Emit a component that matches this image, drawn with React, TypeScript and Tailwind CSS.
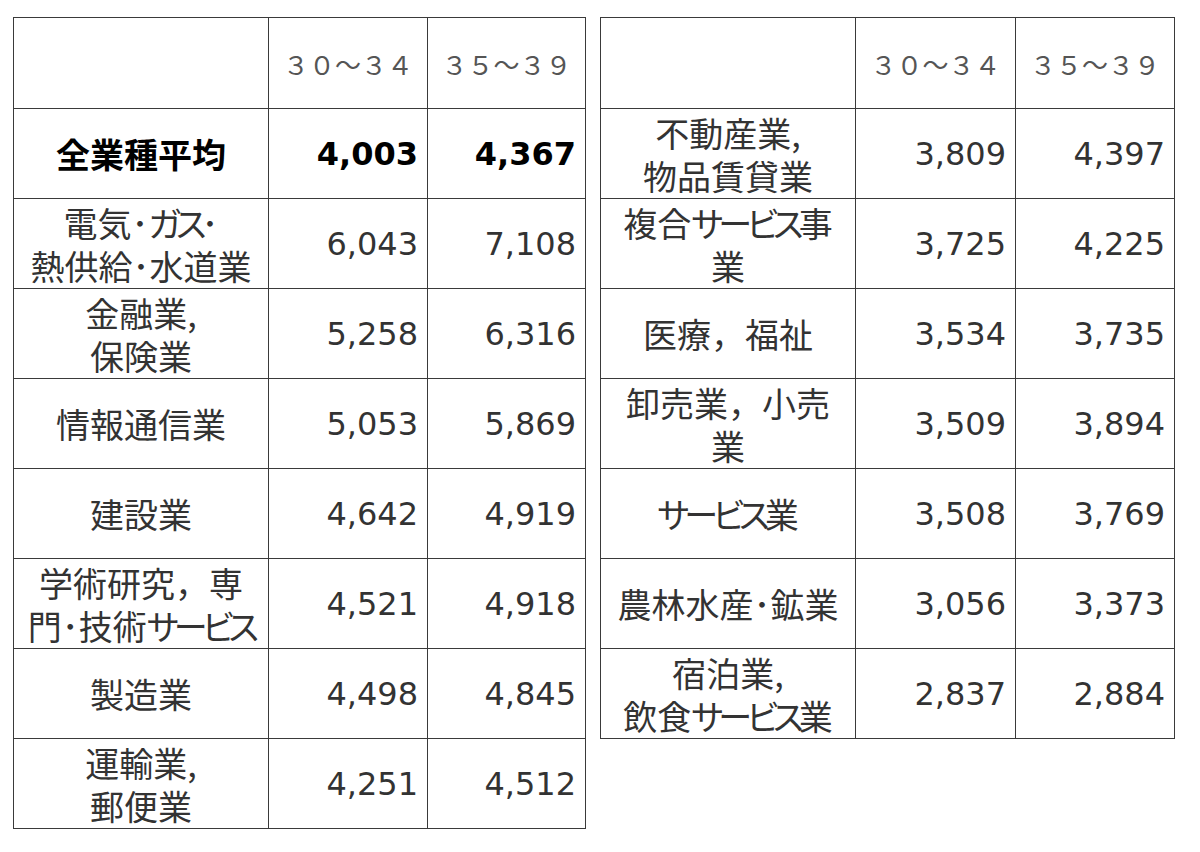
import React from "react";

type Fila = {
  label: React.ReactNode;
  a: string;
  b: string;
  bold?: boolean;
};

const coma = <span className="[font-feature-settings:normal]">，</span>;

// kana mas estrecha, como en Meiryo UI
function K({ children }: { children: React.ReactNode }) {
  return <span className="tracking-[-5px]">{children}</span>;
}

const izquierda: Fila[] = [
  { label: "全業種平均", a: "4,003", b: "4,367", bold: true },
  { label: <>電気･<K>ガス</K>･<br />熱供給･水道業</>, a: "6,043", b: "7,108" },
  { label: <>金融業,<br />保険業</>, a: "5,258", b: "6,316" },
  { label: "情報通信業", a: "5,053", b: "5,869" },
  { label: "建設業", a: "4,642", b: "4,919" },
  { label: <>学術研究{coma}専<br />門･技術<K>サービス</K></>, a: "4,521", b: "4,918" },
  { label: "製造業", a: "4,498", b: "4,845" },
  { label: <>運輸業,<br />郵便業</>, a: "4,251", b: "4,512" },
];

const derecha: Fila[] = [
  { label: <>不動産業,<br />物品賃貸業</>, a: "3,809", b: "4,397" },
  { label: <>複合<K>サービス</K>事<br />業</>, a: "3,725", b: "4,225" },
  { label: <>医療{coma}福祉</>, a: "3,534", b: "3,735" },
  { label: <>卸売業{coma}小売<br />業</>, a: "3,509", b: "3,894" },
  { label: <><K>サービス</K>業</>, a: "3,508", b: "3,769" },
  { label: "農林水産･鉱業", a: "3,056", b: "3,373" },
  { label: <>宿泊業,<br />飲食<K>サービス</K>業</>, a: "2,837", b: "2,884" },
];

function Tabla({ filas, anchos }: { filas: Fila[]; anchos: string[] }) {
  return (
    <table className="border-collapse table-fixed">
      <colgroup>
        <col className={anchos[0]} />
        <col className={anchos[1]} />
        <col className={anchos[2]} />
      </colgroup>
      <tbody>
        <tr className="h-[91px]">
          <td className="border border-[#3a3a3a]"></td>
          <td className="border border-[#3a3a3a] text-center text-[26px] text-[#555] font-['Noto_Sans_CJK_JP',sans-serif]">
            ３０～３４
          </td>
          <td className="border border-[#3a3a3a] text-center text-[26px] text-[#555] font-['Noto_Sans_CJK_JP',sans-serif]">
            ３５～３９
          </td>
        </tr>
        {filas.map((f, i) => (
          <tr key={i} className="h-[90px]">
            <td
              className={`border border-[#3a3a3a] p-0 text-center text-[34px] leading-[43px] whitespace-nowrap [font-feature-settings:'palt'] font-['Noto_Sans_CJK_JP',sans-serif] ${
                f.bold ? "font-bold text-black" : "text-[#333]"
              }`}
            >
              {f.label}
            </td>
            <td
              className={`border border-[#3a3a3a] pr-[9px] text-right text-[32px] font-['DejaVu_Sans','Noto_Sans_CJK_JP',sans-serif] ${
                f.bold ? "font-bold text-black" : "text-[#333]"
              }`}
            >
              {f.a}
            </td>
            <td
              className={`border border-[#3a3a3a] pr-[9px] text-right text-[32px] font-['DejaVu_Sans','Noto_Sans_CJK_JP',sans-serif] ${
                f.bold ? "font-bold text-black" : "text-[#333]"
              }`}
            >
              {f.b}
            </td>
          </tr>
        ))}
      </tbody>
    </table>
  );
}

export default function App() {
  return (
    <div className="w-[1200px] h-[852px] bg-white overflow-hidden">
      <div className="flex items-start gap-[14px] pl-[13px] pt-[17px]">
        <Tabla filas={izquierda} anchos={["w-[255px]", "w-[159px]", "w-[158px]"]} />
        <Tabla filas={derecha} anchos={["w-[255px]", "w-[160px]", "w-[159px]"]} />
      </div>
    </div>
  );
}
